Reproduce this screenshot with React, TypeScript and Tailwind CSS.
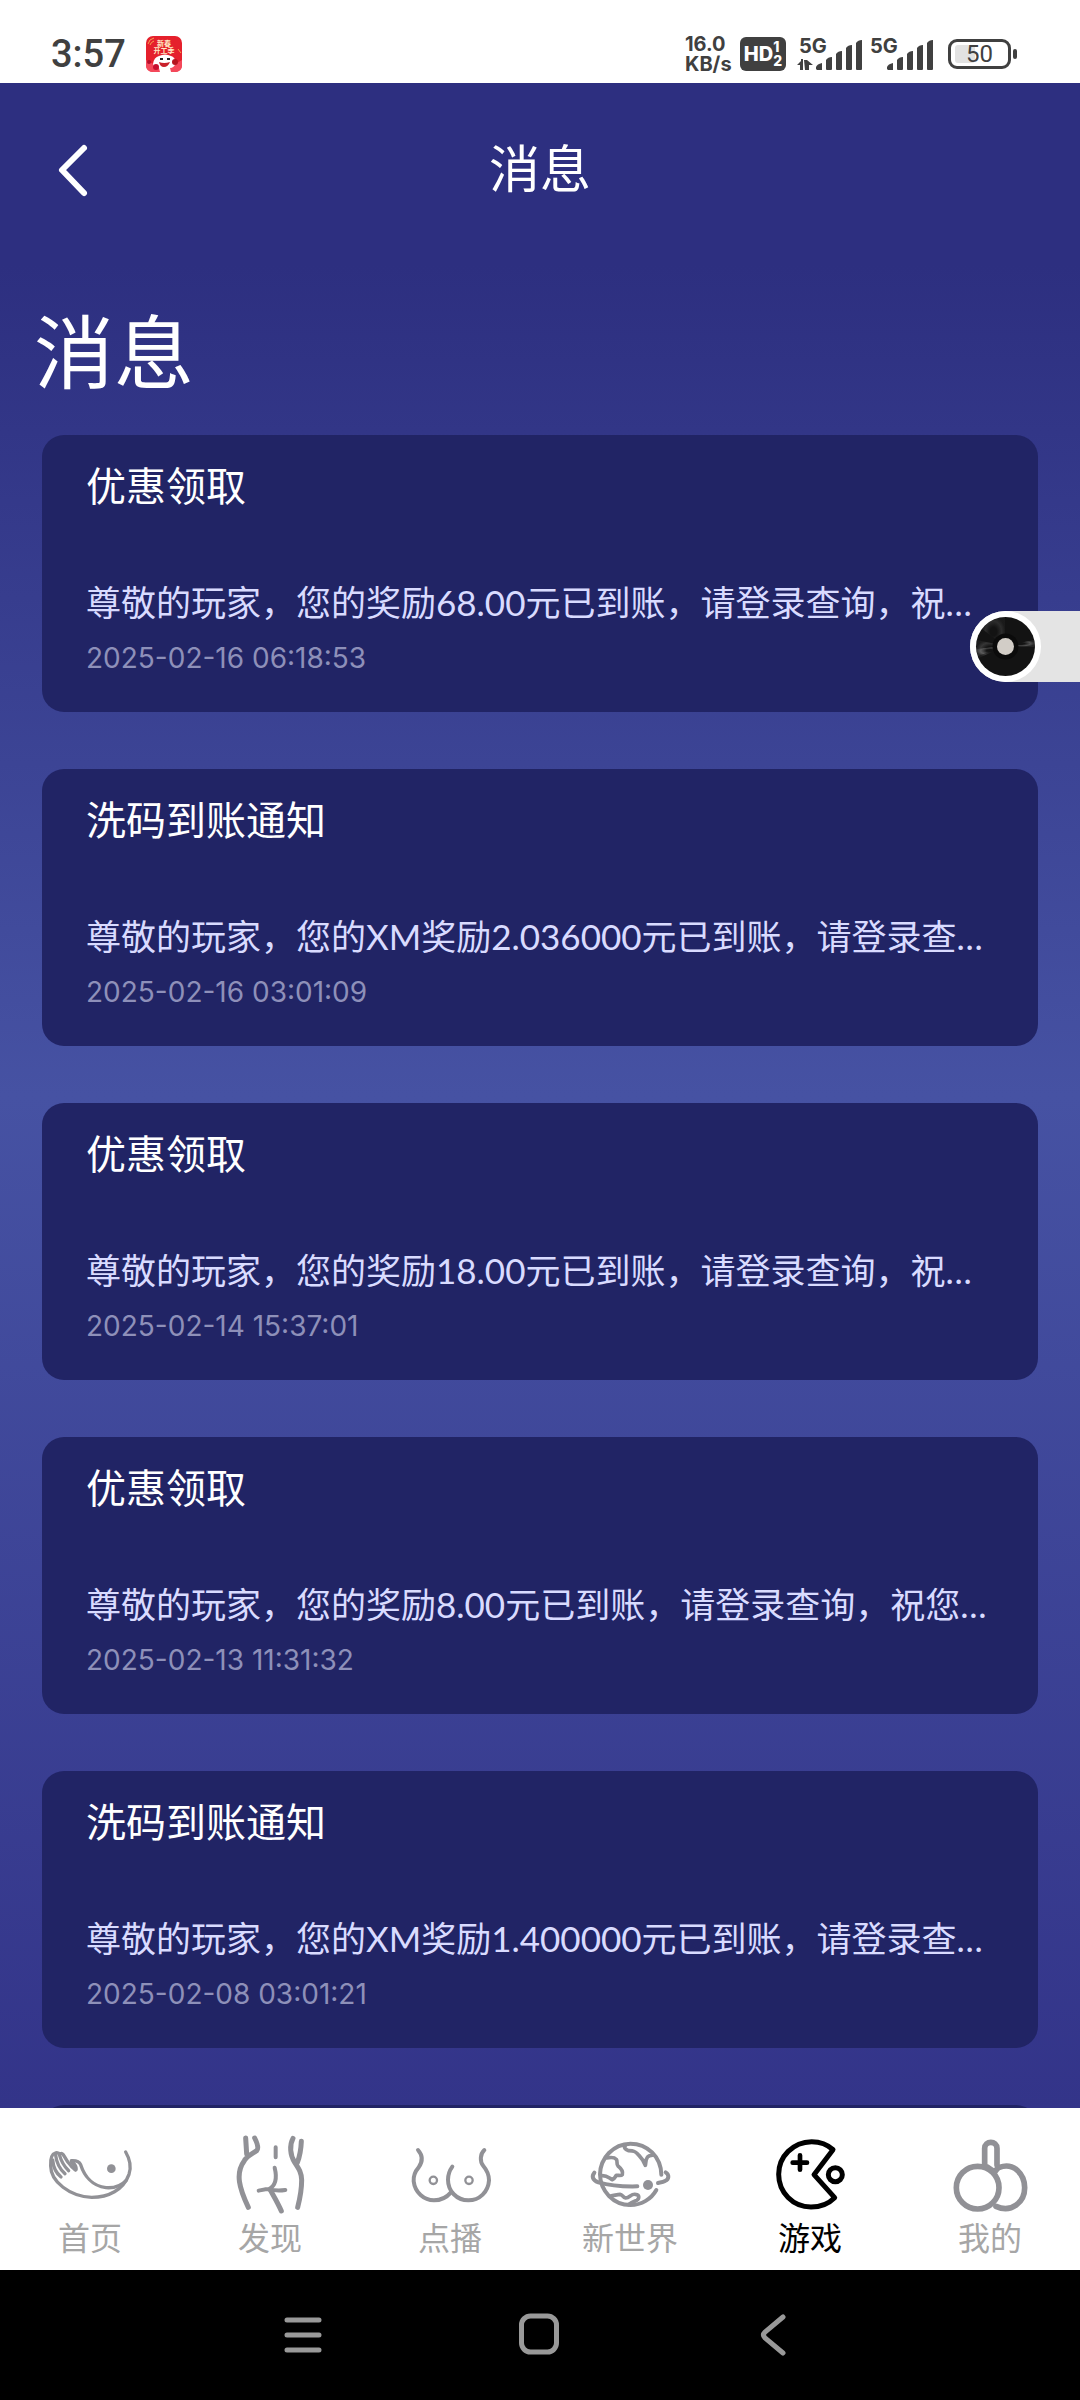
import type { ReactNode } from "react";

const messages = [
  {
    title: "优惠领取",
    body: "尊敬的玩家，您的奖励68.00元已到账，请登录查询，祝…",
    time: "2025-02-16 06:18:53",
  },
  {
    title: "洗码到账通知",
    body: "尊敬的玩家，您的XM奖励2.036000元已到账，请登录查…",
    time: "2025-02-16 03:01:09",
  },
  {
    title: "优惠领取",
    body: "尊敬的玩家，您的奖励18.00元已到账，请登录查询，祝…",
    time: "2025-02-14 15:37:01",
  },
  {
    title: "优惠领取",
    body: "尊敬的玩家，您的奖励8.00元已到账，请登录查询，祝您…",
    time: "2025-02-13 11:31:32",
  },
  {
    title: "洗码到账通知",
    body: "尊敬的玩家，您的XM奖励1.400000元已到账，请登录查…",
    time: "2025-02-08 03:01:21",
  },
];

type Tab = { label: string; active?: boolean; viewBox: string; icon: ReactNode };

const tabs: Tab[] = [
  {
    label: "首页",
    viewBox: "135 150 270 255",
    icon: (
      <g strokeWidth="10">
        <path d="M377 216 C390 238 394 262 387 283 C370 330 325 352 275 352 C210 350 152 305 152 258 C151 240 155 222 166 219 C173 216 177 222 182 221 C190 217 195 236 205 248 C212 258 218 264 226 270" />
        <path d="M214 242 C228 241 238 245 242 254 C252 285 275 318 318 323 C345 325 365 316 378 302" />
        <path d="M158 240 C160 265 172 282 183 291 M167 226 C170 250 180 268 195 281 M178 224 C184 245 193 260 206 272" />
        <path d="M216 246 C222 253 228 258 227 268" strokeWidth="13" />
        <circle cx="334" cy="266" r="13" fill="currentColor" stroke="none" />
      </g>
    ),
  },
  {
    label: "发现",
    viewBox: "675 150 270 255",
    icon: (
      <g strokeWidth="15">
        <path d="M737 174 L740 222 M764 174 C772 190 777 205 770 212 C750 225 740 228 733 242 C705 280 718 325 745 382" />
        <path d="M879 175 C868 195 870 225 884 247 C898 268 904 278 905 300 C905 330 900 355 893 382 M904 184 C903 210 898 232 892 248" />
        <path d="M827 202 V232 M824 263 C832 295 825 318 806 328 M776 332 C790 329 800 326 809 327 C825 333 842 332 856 330" strokeWidth="12" />
        <path d="M811 330 C825 355 835 372 844 393" />
      </g>
    ),
  },
  {
    label: "点播",
    viewBox: "135 150 270 255",
    icon: (
      <g strokeWidth="12">
        <path d="M174 210 C188 226 189 244 176 262 C162 278 160 290 161 304 C165 338 192 361 222 361 C243 361 260 352 273 337" />
        <path d="M373 210 C360 222 359 245 370 258 C382 272 387 285 387 301 C385 335 359 361 325 361 C290 361 264 333 264 299 C264 284 269 271 277 260" />
        <circle cx="220" cy="301" r="11" strokeWidth="7" />
        <circle cx="327" cy="301" r="11" strokeWidth="7" />
      </g>
    ),
  },
  {
    label: "新世界",
    viewBox: "675 150 270 255",
    icon: (
      <g strokeWidth="12">
        <path d="M904 284 C903 230 862 191 811 191 C760 192 721 234 720 283 C721 334 761 375 811 375 C845 375 874 357 889 330" />
        <path d="M703 278 C695 288 696 300 715 307 C750 317 790 320 832 319" />
        <path d="M917 277 C928 284 928 297 915 303 C908 307 903 307 894 309" />
        <path d="M740 234 C750 232 762 230 769 238 C774 246 768 252 774 258 C784 266 790 274 787 284 C783 289 775 285 769 286 C765 290 764 297 757 299 C748 296 742 285 724 287" strokeWidth="11" />
        <path d="M796 197 C790 203 796 208 805 212 C820 213 825 213 833 222 C840 230 850 237 856 256 C858 250 856 240 862 232 C866 226 872 226 880 225" strokeWidth="11" />
        <path d="M751 348 C762 347 772 343 780 343 C788 344 788 352 797 354 C810 353 813 341 826 343 C840 344 838 357 830 361 C818 366 812 368 805 374" strokeWidth="11" />
        <circle cx="864" cy="315" r="15" fill="currentColor" stroke="none" />
      </g>
    ),
  },
  {
    label: "游戏",
    active: true,
    viewBox: "135 150 270 255",
    icon: (
      <g strokeWidth="15">
        <path d="M339 209 C321 192 299 185 275 185 C219 186 176 229 176 283 C176 338 219 381 273 381 C302 381 326 371 344 353 L282 284 Z" />
        <path d="M240 226 V269 M218 248 H261" strokeWidth="14" />
        <circle cx="346" cy="284" r="21" />
      </g>
    ),
  },
  {
    label: "我的",
    viewBox: "675 150 270 255",
    icon: (
      <g strokeWidth="17">
        <circle cx="773" cy="323" r="64" />
        <path d="M838 262 C882 246 914 283 914 323 C914 365 875 401 828 379" />
        <path d="M794 255 V205 C794 181 831 181 831 205 V255 M802 261 L824 276 L834 263" />
      </g>
    ),
  },
];

const Signal = ({ arrows }: { arrows?: boolean }) => (
  <div className="relative h-9 w-[71px]">
    <span className="absolute left-[3px] top-0 text-[20px] font-bold leading-5">5G</span>
    <svg viewBox="0 0 71 36" className="h-9 w-[71px]" fill="currentColor" aria-hidden="true">
      {arrows && (
        <path d="M1 29 L6 24 V34 H4 V29 Z M8 24 H11 L17 29 H13 V34 H9 Z M5 23 H7 V34 H5 Z" />
      )}
      <path d="M20 33 V31 Q21 28 26 27 V34 H21 Z" />
      <path d="M30 24 Q32 21 36 21 V33 Q36 34 35 34 H31 Q30 34 30 33 Z" />
      <path d="M40 18 Q42 15 46 15 V33 Q46 34 45 34 H41 Q40 34 40 33 Z" />
      <path d="M50 12 Q52 9 56 9 V33 Q56 34 55 34 H51 Q50 34 50 33 Z" />
      <path d="M60 7 Q62 4 66 4 V33 Q66 34 65 34 H61 Q60 34 60 33 Z" />
    </svg>
  </div>
);

const AppBadge = () => (
  <svg viewBox="0 0 36 36" className="h-9 w-9" aria-hidden="true">
    <rect width="36" height="36" rx="7" fill="#e5202c" />
    <path d="M0 24 Q18 36 36 24 V29 Q36 36 29 36 H7 Q0 36 0 29 Z" fill="#f4485a" />
    <path d="M2 8 Q3 3 8 2 M4 9 Q5 6 8 5 M32 13 L35 17" stroke="#f7a04f" fill="none" />
    <text x="18" y="10" textAnchor="middle" fontSize="7" fontWeight="700" fill="#ffe9c4">新春</text>
    <text x="18" y="17" textAnchor="middle" fontSize="7" fontWeight="700" fill="#ffe9c4">开工季</text>
    <path d="M7 28 Q8 21 13 20 Q19 17 25 20 Q29 21 30 27 Q28 32 24 32 L25 36 H14 L13 32 Q8 32 7 28 Z" fill="#fff" />
    <path d="M14 23 H17 M21 23 H24" stroke="#222" strokeWidth="2" />
    <path d="M13 26 Q18 28 24 26 Q22 31 18 31 Q14 31 13 26 Z" fill="#c9202b" />
    <circle cx="3" cy="26" r="2" fill="#b30f2b" />
    <circle cx="10" cy="31" r="3" fill="#c7102f" />
    <circle cx="29" cy="26" r="3" fill="#b5151f" />
  </svg>
);

const StatusBar = () => (
  <div className="flex h-[83px] shrink-0 items-end justify-between bg-white pb-[9px] pl-[51px] pr-[63px] text-[#404040]">
    <div className="flex h-10 items-center gap-5">
      <span className="font-[Roboto] text-[38px] font-medium leading-9">3:57</span>
      <AppBadge />
    </div>
    <div className="flex h-10 items-center">
      <div className="mr-[7px] flex w-12 flex-col text-[20px] font-bold leading-5">
        <span>16.0</span>
        <span>KB/s</span>
      </div>
      <div className="mr-[10px] flex h-[34px] w-[46px] items-center justify-center rounded-md bg-[#404040] text-white">
        <span className="text-xl font-extrabold leading-5">HD</span>
        <span className="flex flex-col text-sm font-extrabold leading-[14px]">
          <span>1</span>
          <span>2</span>
        </span>
      </div>
      <Signal arrows />
      <Signal />
      <div className="ml-[10px] flex items-center gap-[2px]">
        <div className="relative flex h-[30px] w-[63px] items-center justify-center rounded-[9px] border-3 border-[#404040]">
          <div className="absolute left-1 h-[18px] w-5 rounded-[3px] bg-[#e2e2e2]" />
          <span className="relative font-[Roboto] text-2xl leading-6">50</span>
        </div>
        <div className="h-[10px] w-1 rounded-sm bg-[#404040]" />
      </div>
    </div>
  </div>
);

const RecordPlayer = () => (
  <button
    aria-label="播放器"
    className="absolute right-0 top-[528px] h-[71px] w-[110px] rounded-l-full bg-[#e4e4e4]"
  >
    <svg viewBox="0 0 71 71" className="h-[71px] w-[71px]" aria-hidden="true">
      <defs>
        <radialGradient id="sheen">
          <stop offset="0.3" stopColor="#777" stopOpacity="0" />
          <stop offset="0.7" stopColor="#777" />
          <stop offset="1" stopColor="#777" stopOpacity="0.3" />
        </radialGradient>
      </defs>
      <circle cx="35.5" cy="35.5" r="35.5" fill="#fff" />
      <circle cx="35.5" cy="35.5" r="29.5" fill="#131313" />
      <g fill="url(#sheen)">
        <path d="M35 35 L7 29 Q5 37 9 47 Z" opacity="0.35" />
        <path d="M35 35 L6 38 L8 45 Z" opacity="0.6" />
        <path d="M35 35 L12 18 Q21 7 35 6 Z" opacity="0.25" />
        <path d="M35 35 L64 29 L65 36 Z" opacity="0.6" />
      </g>
      <circle cx="35.5" cy="35.5" r="13" fill="#0b0b0b" />
      <circle cx="35.5" cy="35.5" r="8.5" fill="#d2cdc7" />
    </svg>
  </button>
);

const App = () => {
  return (
    <div
      lang="zh-CN"
      className="flex h-screen w-full flex-col overflow-hidden font-[Inter,'Noto_Sans_CJK_SC',sans-serif]"
    >
      <StatusBar />

      <main className="relative min-h-0 flex-1 overflow-hidden bg-[linear-gradient(180deg,#2d2f80_0%,#2d2f80_9%,#4652a3_50%,#333489_100%)] text-white">
        <header className="grid h-[174px] grid-cols-3 items-center px-[52px]">
          <button aria-label="返回" className="w-12">
            <svg viewBox="0 0 48 60" className="h-[60px] w-12" fill="none" stroke="currentColor" strokeWidth="6" strokeLinecap="round" strokeLinejoin="round">
              <path d="M32 8 L10 30 L32 53" />
            </svg>
          </button>
          <span className="text-center text-[51px] leading-[60px]">消息</span>
        </header>

        <h1 className="h-[178px] px-[34px] pt-9 text-[80px] leading-[120px]">消息</h1>

        <div className="flex flex-col gap-[57px] px-[42px]">
          {messages.map((message) => (
            <article key={message.time} className="h-[277px] shrink-0 rounded-[22px] bg-[#212465] px-[44px] pt-[22px]">
              <h2 className="text-[40px] leading-[60px]">{message.title}</h2>
              <p className="mt-[60px] whitespace-nowrap font-[Lato,'Noto_Sans_CJK_SC',sans-serif] text-[35px] leading-[50px] text-[#d9dbff]">
                {message.body}
              </p>
              <time className="block text-[28px] leading-[62px] text-[#8e90b9]">{message.time}</time>
            </article>
          ))}
          <article className="h-[277px] shrink-0 rounded-[22px] bg-[#212465]" />
        </div>

        <RecordPlayer />
      </main>

      <nav className="grid shrink-0 grid-cols-6 bg-white pb-2 pt-[22px]">
        {tabs.map((tab) => (
          <a
            key={tab.label}
            href="#"
            className={`flex flex-col items-center ${tab.active ? "text-black" : "text-[#a6a6a6]"}`}
          >
            <svg
              viewBox={tab.viewBox}
              className={`h-[85px] w-[90px] ${tab.active ? "text-black" : "text-[#919196]"}`}
              fill="none"
              stroke="currentColor"
              strokeLinecap="round"
              strokeLinejoin="round"
              aria-hidden="true"
            >
              {tab.icon}
            </svg>
            <span className="text-[32px] leading-[47px]">{tab.label}</span>
          </a>
        ))}
      </nav>

      <div className="flex h-[130px] shrink-0 items-center justify-center bg-black pr-[2px] text-[#999]">
        <button aria-label="菜单" className="flex w-[236px] justify-center">
          <svg viewBox="0 0 44 44" className="h-11 w-11" stroke="currentColor" strokeWidth="5" strokeLinecap="round">
            <path d="M6 7 H38 M6 22 H38 M6 37 H38" />
          </svg>
        </button>
        <button aria-label="主页" className="flex w-[236px] justify-center">
          <svg viewBox="0 0 44 44" className="h-11 w-11" fill="none" stroke="currentColor" strokeWidth="5">
            <rect x="4.5" y="3" width="35" height="36" rx="9" />
          </svg>
        </button>
        <button aria-label="后退" className="flex w-[236px] justify-center">
          <svg viewBox="0 0 44 44" className="h-11 w-11" fill="none" stroke="currentColor" strokeWidth="5" strokeLinecap="round">
            <path d="M30 4 L12 19 Q9 22 12 25 L30 40" />
          </svg>
        </button>
      </div>
    </div>
  );
};

export default App;
